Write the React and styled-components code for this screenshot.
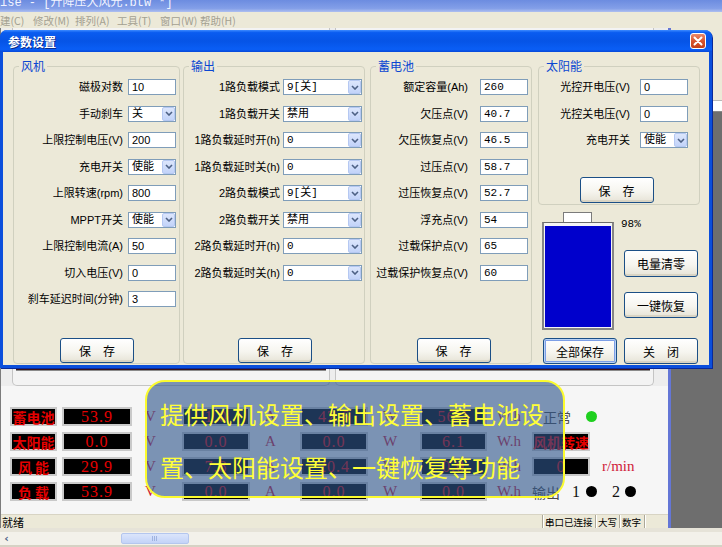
import React from "react";
import styled, { createGlobalStyle } from "styled-components";

const CJK = '"Noto Sans CJK SC", sans-serif';
const MONO_CJK = '"Liberation Mono", "Noto Sans CJK SC", monospace';
const SANS_CJK = '"Liberation Sans", "Noto Sans CJK SC", sans-serif';

const GlobalStyle = createGlobalStyle`
  html, body { margin: 0; padding: 0; }
  body {
    width: 722px;
    height: 547px;
    overflow: hidden;
    background: #ece9d8;
    font-family: ${CJK};
  }
  * { box-sizing: border-box; }
`;

const Screen = styled.div`
  position: relative;
  width: 722px;
  height: 547px;
  display: flex;
  flex-direction: column;
  overflow: hidden;
`;

/* ---------- main frame ---------- */

const AppTitle = styled.div`
  height: 12px;
  flex: none;
  background: linear-gradient(180deg, #6c8ce0 0%, #839fe8 70%, #aebff0 100%);
  color: #f2f4ff;
  font: 12px ${MONO_CJK};
  line-height: 7px;
  white-space: nowrap;
  overflow: hidden;
`;

const MenuBar = styled.div`
  height: 16px;
  flex: none;
  display: flex;
  align-items: center;
  background: #ece9d8;
  color: #a3a091;
  font: 10.5px ${CJK};
`;

const MenuItem = styled.span`
  width: ${(p) => p.$w}px;
  flex: none;
  white-space: nowrap;
`;

const Workspace = styled.div`
  height: 500px;
  flex: none;
  display: flex;
`;

const ChildWindow = styled.div`
  width: 671px;
  flex: none;
  display: flex;
  flex-direction: column;
  background: #f6f6f6;
  border-left: 1px solid #7c7c7c;
  border-right: 3px solid #6476d6;
`;

const ChartRow = styled.div`
  height: 358px;
  flex: none;
  display: flex;
  gap: 5px;
  padding: 0 14px 0 11px;
  background: #ededed;
`;

const ChartBox = styled.div`
  flex: ${(p) => p.$grow};
  display: flex;
  flex-direction: column;
  justify-content: flex-end;
  padding: 0 3px 7px;
  border: 1px solid #c4c4c4;
  border-top: none;
  border-radius: 0 0 5px 5px;
  background: #f3f3f3;
`;

const ChartAxis = styled.div`
  height: 3px;
  margin-bottom: 7px;
  background: #3b1418;
  border-bottom: 1px solid #8a8a8a;
`;

const LedGrid = styled.div`
  margin-top: 21px;
  display: grid;
  grid-template-columns: 52px 70px 50px 68px 50px 68px 52px 67px 45px 1fr;
  grid-auto-rows: 19px;
  row-gap: 6px;
  padding-left: 9px;
`;

const LedBox = styled.div`
  width: ${(p) => p.$w}px;
  height: 19px;
  display: flex;
  align-items: center;
  justify-content: center;
  background: #000;
  border: 2px solid #c9c9c9;
  color: #e40000;
  white-space: pre;
  font: ${(p) =>
    p.$label ? `700 14px ${CJK}` : '16px "Liberation Serif", serif'};
  letter-spacing: ${(p) => (p.$label ? 0 : 1)}px;
`;

const Unit = styled.div`
  padding-left: ${(p) => p.$pad}px;
  display: flex;
  align-items: center;
  color: #d0203a;
  font: 15px "Liberation Serif", serif;
`;

const StatusCell = styled.div`
  display: flex;
  align-items: center;
`;

const StatusText = styled.span`
  color: #4a4a4a;
  font: 14px ${CJK};
  margin-left: ${(p) => p.$ml || 0}px;
`;

const Digit = styled.span`
  color: #111;
  font: 16px "Liberation Serif", serif;
  margin-left: ${(p) => p.$ml || 0}px;
`;

const Dot = styled.span`
  width: 11px;
  height: 11px;
  border-radius: 50%;
  background: ${(p) => p.$color};
  margin-left: ${(p) => p.$ml || 0}px;
`;

const StatusBar = styled.div`
  margin-top: auto;
  height: 14px;
  display: flex;
  align-items: center;
  background: #ece9d8;
  border-top: 1px solid #d8d4c4;
  font: 9.5px ${CJK};
  color: #000;
`;

const StatusMain = styled.div`
  flex: 1;
  padding-left: 1px;
  font-size: 11px;
`;

const StatusPane = styled.div`
  width: ${(p) => p.$w}px;
  height: 100%;
  display: flex;
  align-items: center;
  padding-left: 2px;
  border-left: 1px solid #aca899;
  box-shadow: inset 1px 0 0 #fff;
  white-space: nowrap;
  overflow: hidden;
`;

const MdiBack = styled.div`
  flex: 1;
  display: flex;
  flex-direction: column;
`;

const ToolStrip = styled.div`
  height: 72px;
  background: #ece9d8;
`;

const Ruler = styled.div`
  height: 12px;
  background: linear-gradient(90deg, #fff 0 3px, #777 3px 4px, #fff 4px);
  border-top: 1px solid #b8b8b8;
  border-bottom: 1px solid #8a8a8a;
`;

const MdiGrey = styled.div`
  flex: 1;
  background: #6e6e6e;
`;

const HScroll = styled.div`
  height: 19px;
  flex: none;
  display: flex;
  align-items: center;
  gap: 108px;
  background: #f3f1ea;
  border-top: 4px solid #e6e3d8;
  border-bottom: 2px solid #d6d2c4;
`;

const ScrollArrow = styled.div`
  width: 13px;
  height: 13px;
  display: flex;
  align-items: center;
  justify-content: center;
  color: #4d6185;
  font: 700 11px "DejaVu Sans", sans-serif;
`;

const ScrollThumb = styled.div`
  width: 68px;
  height: 11px;
  border: 1px solid #b4c6ee;
  border-radius: 2px;
  background: linear-gradient(180deg, #dbe5fb, #c3d3f8);
  display: flex;
  align-items: center;
  justify-content: center;
  &::after {
    content: "";
    width: 6px;
    height: 5px;
    background: repeating-linear-gradient(90deg, #9fb3e0 0 1px, transparent 1px 2px);
  }
`;

/* ---------- dialog ---------- */

const Dialog = styled.div`
  position: absolute;
  left: 0;
  top: 30px;
  width: 712px;
  height: 338px;
  display: flex;
  flex-direction: column;
  background: #0b4fdc;
  border-radius: 7px 7px 0 0;
  box-shadow: 1px 1px 0 #0a2a9a;
`;

const DialogTitle = styled.div`
  height: 22px;
  flex: none;
  display: flex;
  align-items: center;
  justify-content: space-between;
  padding: 0 6px 0 8px;
  border-radius: 7px 7px 0 0;
  background: linear-gradient(
    180deg,
    #3d8bff 0%,
    #0a5cf0 12%,
    #0654e6 50%,
    #0a5ef5 88%,
    #0848d8 100%
  );
  color: #fff;
  font: 700 12px ${CJK};
  text-shadow: 1px 1px 0 #0a2a8a;
`;

const CloseButton = styled.div`
  width: 16px;
  height: 16px;
  display: flex;
  align-items: center;
  justify-content: center;
  border: 1px solid #fff;
  border-radius: 3px;
  background: linear-gradient(180deg, #ea8a6c 0%, #d8552f 50%, #c23e18 100%);
`;

const DialogBody = styled.div`
  flex: 1;
  margin: 0 3px 3px;
  display: flex;
  gap: 3px;
  padding: 14px 9px 1px 10px;
  background: #ece9d8;
`;

const Group = styled.div`
  position: relative;
  width: ${(p) => p.$w}px;
  height: ${(p) => p.$h || 298}px;
  flex: none;
  margin-right: ${(p) => p.$mr || 0}px;
  display: flex;
  flex-direction: column;
  padding: 12px ${(p) => p.$pr}px ${(p) => p.$pb || 0}px 4px;
  border: 1px solid #d0d0bf;
  border-radius: 4px;
`;

const Legend = styled.span`
  position: absolute;
  top: -9px;
  left: 5px;
  padding: 0 2px;
  background: #ece9d8;
  color: #0a46d2;
  font: 12px ${CJK};
  line-height: 16px;
`;

const FormGrid = styled.div`
  display: grid;
  grid-template-columns: 1fr ${(p) => p.$field}px;
  column-gap: ${(p) => p.$gap}px;
  grid-auto-rows: 16px;
  row-gap: 10.5px;
`;

const FieldLabel = styled.span`
  text-align: right;
  white-space: nowrap;
  font: 11px ${SANS_CJK};
  line-height: 16px;
  color: #000;
`;

const TextBox = styled.div`
  height: 16px;
  padding-left: 3px;
  background: #fff;
  border: 1px solid #7f9db9;
  font: 11px ${(p) => (p.$mono ? MONO_CJK : SANS_CJK)};
  line-height: 14px;
  color: #000;
  white-space: nowrap;
`;

const Combo = styled.div`
  height: 16px;
  display: flex;
  background: #fff;
  border: 1px solid #7f9db9;
`;

const ComboValue = styled.span`
  flex: 1;
  padding-left: 3px;
  font: 11px ${MONO_CJK};
  line-height: 14px;
  white-space: nowrap;
  overflow: hidden;
`;

const ComboArrow = styled.span`
  width: 13px;
  display: flex;
  align-items: center;
  justify-content: center;
  border: 1px solid #b5c8f2;
  border-radius: 2px;
  background: linear-gradient(180deg, #dce6fc 0%, #c2d3f9 100%);
`;

const XPButton = styled.button`
  width: 74px;
  height: ${(p) => p.$h || 26}px;
  flex: none;
  padding: 0;
  border: 1px solid #1b4f86;
  border-radius: 3px;
  background: linear-gradient(180deg, #ffffff 0%, #f6f5ef 55%, #e6e3d6 100%);
  box-shadow: ${(p) =>
    p.$default
      ? "inset 0 0 0 1px #b9d2f6, inset 0 0 0 2px #7d9fe6"
      : "inset 0 -2px 0 #d9d4c4"};
  color: #000;
  font: 12px ${CJK};
  white-space: pre;
  margin-top: ${(p) => p.$mt || 0}px;
  margin-left: ${(p) => p.$ml || 0}px;
`;

const GroupFooter = styled.div`
  margin-top: auto;
  display: flex;
  justify-content: center;
  padding-left: ${(p) => p.$shift || 0}px;
`;

const RightColumn = styled.div`
  width: 162px;
  flex: none;
  display: flex;
  flex-direction: column;
`;

const BatteryRow = styled.div`
  margin-top: 7px;
  display: flex;
  padding-left: 4px;
`;

const Battery = styled.div`
  width: 72px;
  display: flex;
  flex-direction: column;
`;

const BatteryCap = styled.div`
  width: 29px;
  height: 10px;
  margin-left: 21px;
  background: #fff;
  border: 1px solid #7b7b7b;
  border-bottom: none;
`;

const BatteryShell = styled.div`
  height: 108px;
  display: flex;
  flex-direction: column;
  justify-content: flex-end;
  padding: 1px;
  background: #f4f4f4;
  border: 2px solid #858585;
  border-top: 1px solid #6c6c6c;
`;

const BatteryLevel = styled.div`
  background: #0000cc;
`;

const BatterySide = styled.div`
  margin-left: 7px;
  display: flex;
  flex-direction: column;
`;

const Percent = styled.span`
  margin-top: 6px;
  font: 11px "Liberation Mono", monospace;
  line-height: 12px;
  color: #000;
`;

const BottomButtons = styled.div`
  margin-top: auto;
  display: flex;
  gap: 7px;
  padding-left: 5px;
`;

/* ---------- callout ---------- */

const Callout = styled.div`
  position: absolute;
  left: 145px;
  top: 380px;
  width: 420px;
  height: 118px;
  padding: 5px 0 0 13px;
  border: 2px solid #fbfb2e;
  border-radius: 20px;
  background: rgba(46, 85, 138, 0.62);
  color: #ffff38;
  font: 24px ${CJK};
  line-height: 53px;
  white-space: nowrap;
`;

/* ---------- data ---------- */

const fanFields = [
  ["磁极对数", "text", "10"],
  ["手动刹车", "combo", "关"],
  ["上限控制电压(V)", "text", "200"],
  ["充电开关", "combo", "使能"],
  ["上限转速(rpm)", "text", "800"],
  ["MPPT开关", "combo", "使能"],
  ["上限控制电流(A)", "text", "50"],
  ["切入电压(V)", "text", "0"],
  ["刹车延迟时间(分钟)", "text", "3"],
];

const outputFields = [
  ["1路负载模式", "combo", "9[关]"],
  ["1路负载开关", "combo", "禁用"],
  ["1路负载延时开(h)", "combo", "0"],
  ["1路负载延时关(h)", "combo", "0"],
  ["2路负载模式", "combo", "9[关]"],
  ["2路负载开关", "combo", "禁用"],
  ["2路负载延时开(h)", "combo", "0"],
  ["2路负载延时关(h)", "combo", "0"],
];

const batteryFields = [
  ["额定容量(Ah)", "text", "260"],
  ["欠压点(V)", "text", "40.7"],
  ["欠压恢复点(V)", "text", "46.5"],
  ["过压点(V)", "text", "58.7"],
  ["过压恢复点(V)", "text", "52.7"],
  ["浮充点(V)", "text", "54"],
  ["过载保护点(V)", "text", "65"],
  ["过载保护恢复点(V)", "text", "60"],
];

const solarFields = [
  ["光控开电压(V)", "text", "0"],
  ["光控关电压(V)", "text", "0"],
  ["充电开关", "combo", "使能"],
];

const ledRows = [
  { name: "蓄电池", v: ["53.9", "1.0", "42.6", "56.1"] },
  { name: "太阳能", v: ["0.0", "0.0", "0.0", "6.1"] },
  { name: "风 能", v: ["29.9", "7.8", "20.4", "0.0"] },
  { name: "负 载", v: ["53.9", "0.0", "0.0", "0.0"] },
];

const menus = [
  ["建(C)", 33],
  ["修改(M)", 42],
  ["排列(A)", 42],
  ["工具(T)", 43],
  ["窗口(W)", 40],
  ["帮助(H)", 60],
];

/* ---------- pieces ---------- */

function Chevron() {
  return (
    <svg width="8" height="5" viewBox="0 0 8 5">
      <path d="M1 1 L4 4 L7 1" fill="none" stroke="#4d6185" strokeWidth="1.6" />
    </svg>
  );
}

function Fields({ rows, field, gap, mono }) {
  return (
    <FormGrid $field={field} $gap={gap}>
      {rows.map(([label, kind, value]) => (
        <React.Fragment key={label}>
          <FieldLabel>{label}</FieldLabel>
          {kind === "combo" ? (
            <Combo>
              <ComboValue>{value}</ComboValue>
              <ComboArrow>
                <Chevron />
              </ComboArrow>
            </Combo>
          ) : (
            <TextBox $mono={mono}>{value}</TextBox>
          )}
        </React.Fragment>
      ))}
    </FormGrid>
  );
}

function StatusColumn({ row }) {
  if (row === 0)
    return (
      <StatusCell>
        <StatusText $ml={11}>正常</StatusText>
        <Dot $color="#1fd01f" $ml={15} />
      </StatusCell>
    );
  if (row === 1)
    return (
      <StatusCell>
        <LedBox $w={58} $label>
          风机转速
        </LedBox>
      </StatusCell>
    );
  if (row === 2)
    return (
      <StatusCell>
        <LedBox $w={58}>0</LedBox>
        <Unit $pad={12}>r/min</Unit>
      </StatusCell>
    );
  return (
    <StatusCell>
      <StatusText>输出</StatusText>
      <Digit $ml={12}>1</Digit>
      <Dot $color="#000" $ml={6} />
      <Digit $ml={15}>2</Digit>
      <Dot $color="#000" $ml={5} />
    </StatusCell>
  );
}

export default function App() {
  const level = 98;
  return (
    <>
      <GlobalStyle />
      <Screen>
        <AppTitle>ise - [升降压大风光.btw *]</AppTitle>
        <MenuBar>
          {menus.map(([m, w]) => (
            <MenuItem key={m} $w={w}>
              {m}
            </MenuItem>
          ))}
        </MenuBar>

        <Workspace>
          <ChildWindow>
            <ChartRow>
              <ChartBox $grow={318}>
                <ChartAxis />
              </ChartBox>
              <ChartBox $grow={319}>
                <ChartAxis />
              </ChartBox>
            </ChartRow>

            <LedGrid>
              {ledRows.map((r, i) => (
                <React.Fragment key={r.name}>
                  <LedBox $w={47} $label>
                    {r.name}
                  </LedBox>
                  <LedBox $w={70}>{r.v[0]}</LedBox>
                  <Unit $pad={13}>V</Unit>
                  <LedBox $w={68}>{r.v[1]}</LedBox>
                  <Unit $pad={15}>A</Unit>
                  <LedBox $w={68}>{r.v[2]}</LedBox>
                  <Unit $pad={15}>W</Unit>
                  <LedBox $w={67}>{r.v[3]}</LedBox>
                  <Unit $pad={10}>W.h</Unit>
                  <StatusColumn row={i} />
                </React.Fragment>
              ))}
            </LedGrid>

            <StatusBar>
              <StatusMain>就绪</StatusMain>
              <StatusPane $w={53}>串口已连接</StatusPane>
              <StatusPane $w={24}>大写</StatusPane>
              <StatusPane $w={25}>数字</StatusPane>
              <StatusPane $w={24} />
            </StatusBar>
          </ChildWindow>

          <MdiBack>
            <ToolStrip />
            <Ruler />
            <MdiGrey />
          </MdiBack>
        </Workspace>

        <HScroll>
          <ScrollArrow>‹</ScrollArrow>
          <ScrollThumb />
        </HScroll>

        <Dialog>
          <DialogTitle>
            <span>参数设置</span>
            <CloseButton>
              <svg width="10" height="10" viewBox="0 0 10 10">
                <path
                  d="M1.5 1.5 L8.5 8.5 M8.5 1.5 L1.5 8.5"
                  stroke="#fff"
                  strokeWidth="2"
                  strokeLinecap="round"
                />
              </svg>
            </CloseButton>
          </DialogTitle>

          <DialogBody>
            <Group $w={167} $pr={3}>
              <Legend>风机</Legend>
              <Fields rows={fanFields} field={48} gap={5} />
              <GroupFooter>
                <XPButton $h={25}>保　存</XPButton>
              </GroupFooter>
            </Group>

            <Group $w={182} $pr={2} $mr={2}>
              <Legend>输出</Legend>
              <Fields rows={outputFields} field={79} gap={3} />
              <GroupFooter>
                <XPButton $h={25}>保　存</XPButton>
              </GroupFooter>
            </Group>

            <Group $w={162} $pr={3} $mr={3}>
              <Legend>蓄电池</Legend>
              <Fields rows={batteryFields} field={48} gap={12} mono />
              <GroupFooter $shift={4}>
                <XPButton $h={25}>保　存</XPButton>
              </GroupFooter>
            </Group>

            <RightColumn>
              <Group $w={162} $h={139} $pr={11} $pb={1}>
                <Legend>太阳能</Legend>
                <Fields rows={solarFields} field={48} gap={10} />
                <GroupFooter $shift={2}>
                  <XPButton $h={26}>保　存</XPButton>
                </GroupFooter>
              </Group>

              <BatteryRow>
                <Battery>
                  <BatteryCap />
                  <BatteryShell>
                    <BatteryLevel style={{ height: `${level}%` }} />
                  </BatteryShell>
                </Battery>
                <BatterySide>
                  <Percent>{level}%</Percent>
                  <XPButton $mt={20} $ml={3} $h={27}>
                    电量清零
                  </XPButton>
                  <XPButton $mt={15} $ml={3}>
                    一键恢复
                  </XPButton>
                </BatterySide>
              </BatteryRow>

              <BottomButtons>
                <XPButton $default>全部保存</XPButton>
                <XPButton>关　闭</XPButton>
              </BottomButtons>
            </RightColumn>
          </DialogBody>
        </Dialog>

        <Callout>
          <div>提供风机设置、输出设置、蓄电池设</div>
          <div>置、太阳能设置、一键恢复等功能</div>
        </Callout>
      </Screen>
    </>
  );
}
